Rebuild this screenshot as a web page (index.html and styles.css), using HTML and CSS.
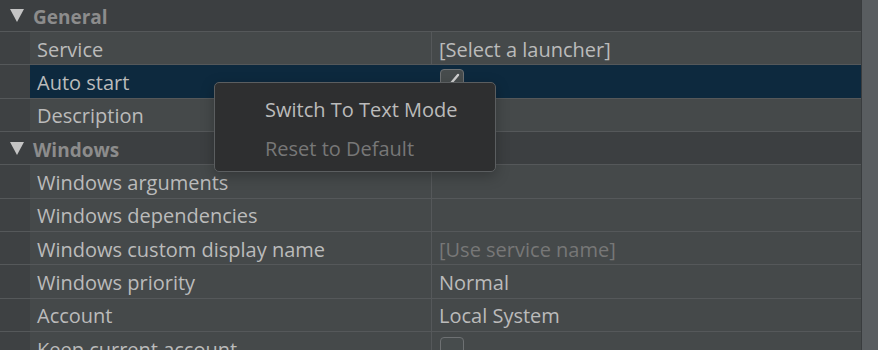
FILE: index.html
```html
<!DOCTYPE html>
<html lang="en">
<head>
    <meta charset="UTF-8">
    <title>Properties</title>
    <link rel="stylesheet" href="styles.css">
</head>
<body>
    <div class="frame">
        <div class="sheet">
            <div class="rows">
                <div class="group">
                    <svg class="arrow" width="14" height="13" viewBox="0 0 14 13"><polygon points="0,0 14,0 7,13" fill="#c4c4c4"/></svg>
                    General
                </div>
                <div class="row">
                    <div class="gutter"></div>
                    <div class="name">Service</div>
                    <div class="value">[Select a launcher]</div>
                </div>
                <div class="row selected">
                    <div class="gutter"></div>
                    <div class="name">Auto start</div>
                    <div class="value">
                        <span class="check on">
                            <svg width="22" height="22" viewBox="0 0 22 22"><path d="M2 14 L6 18 L17 5" fill="none" stroke="#cfcfcf" stroke-width="2.4" stroke-linecap="round" stroke-linejoin="round"/></svg>
                        </span>
                    </div>
                </div>
                <div class="row">
                    <div class="gutter"></div>
                    <div class="name">Description</div>
                    <div class="value"></div>
                </div>
                <div class="group">
                    <svg class="arrow" width="14" height="13" viewBox="0 0 14 13"><polygon points="0,0 14,0 7,13" fill="#c4c4c4"/></svg>
                    Windows
                </div>
                <div class="row">
                    <div class="gutter"></div>
                    <div class="name">Windows arguments</div>
                    <div class="value"></div>
                </div>
                <div class="row">
                    <div class="gutter"></div>
                    <div class="name">Windows dependencies</div>
                    <div class="value"></div>
                </div>
                <div class="row">
                    <div class="gutter"></div>
                    <div class="name">Windows custom display name</div>
                    <div class="value placeholder">[Use service name]</div>
                </div>
                <div class="row">
                    <div class="gutter"></div>
                    <div class="name">Windows priority</div>
                    <div class="value">Normal</div>
                </div>
                <div class="row">
                    <div class="gutter"></div>
                    <div class="name">Account</div>
                    <div class="value">Local System</div>
                </div>
                <div class="row">
                    <div class="gutter"></div>
                    <div class="name">Keep current account</div>
                    <div class="value"><span class="check"></span></div>
                </div>
            </div>

            <div class="menu">
                <div class="menu-item">Switch To Text Mode</div>
                <div class="menu-item disabled">Reset to Default</div>
            </div>
        </div>
        <div class="scrollbar"></div>
    </div>
</body>
</html>
```

FILE: styles.css
```css
body {
    margin: 0;
    background-color: #3c3f41;
    font-family: "Open Sans", "Noto Sans", sans-serif;
    font-size: 20px;
    color: #bbbbbb;
    overflow: hidden;
}

.frame {
    display: flex;
    width: 878px;
    height: 350px;
    overflow: hidden;
}

.sheet {
    position: relative;
    width: 861px;
    border-right: 1px solid #393c3e;
    overflow: hidden;
}

.rows {
    margin-top: -1.33px;
}

.group {
    display: flex;
    align-items: center;
    padding-top: 4px;
    height: 28.33px;
    border-bottom: 1px solid #55585a;
    background-color: #3c3f41;
    color: #8c8c8c;
    font-weight: 700;
    font-size: 19px;
    padding-left: 10px;
}

.arrow {
    margin-right: 9px;
    margin-top: -3px;
}

.row {
    display: flex;
    height: 32.33px;
    border-bottom: 1px solid #55585a;
    background-color: #45494a;
}

.gutter {
    width: 30px;
    flex-shrink: 0;
    background-color: #3e4143;
}

.name {
    width: 394px;
    padding: 2px 0 0 7px;
    border-right: 1px solid #55585a;
    display: flex;
    align-items: center;
    white-space: nowrap;
}

.value {
    flex: 1;
    padding: 2px 0 0 7px;
    display: flex;
    align-items: center;
    white-space: nowrap;
}

.placeholder {
    color: #777777;
}

.selected {
    background-color: #0d293e;
}

.selected .name {
    border-right-color: #0d293e;
}

.check {
    display: inline-flex;
    width: 22px;
    height: 22px;
    margin-left: 1px;
    border: 1px solid #6e7173;
    border-radius: 4px;
    background-color: #474c4d;
    align-self: flex-start;
    margin-top: 3px;
}

.selected .check {
    margin-top: 2px;
}

.menu {
    position: absolute;
    left: 214px;
    top: 82px;
    width: 282px;
    height: 90px;
    padding-top: 7px;
    box-sizing: border-box;
    background-color: #2e2f30;
    border: 1px solid #5b5e60;
    border-radius: 5px;
    box-shadow: 0 4px 14px rgba(0, 0, 0, 0.25);
}

.menu-item {
    height: 39px;
    line-height: 39px;
    padding-left: 50px;
    color: #bbbbbb;
}

.menu-item.disabled {
    color: #777777;
}

.scrollbar {
    flex: 1;
    background-color: #595d60;
}
```
